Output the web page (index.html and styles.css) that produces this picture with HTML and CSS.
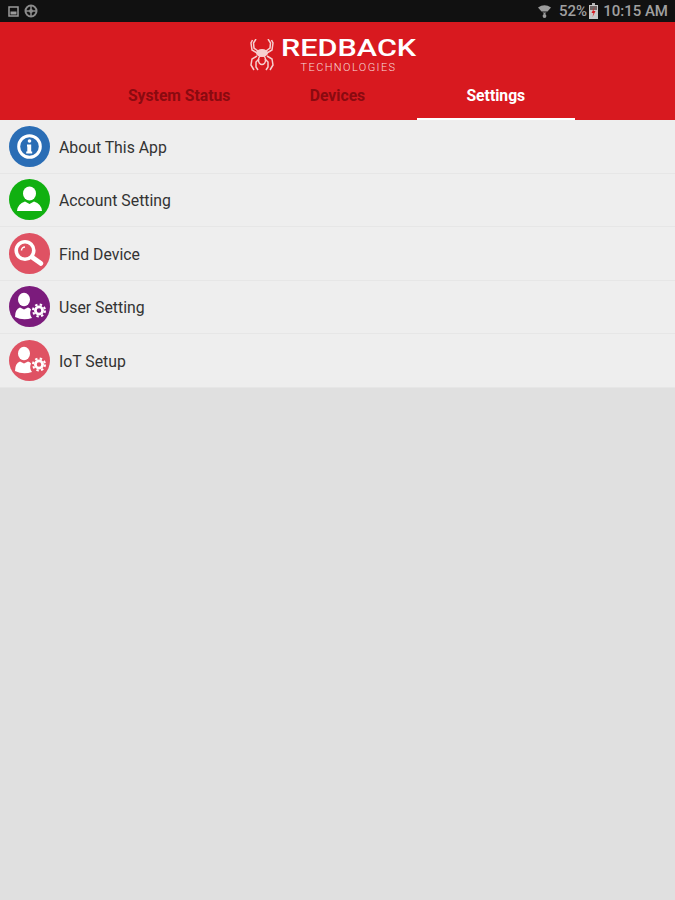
FILE: index.html
```html
<!DOCTYPE html>
<html>
<head lang="en">
    <meta charset="UTF-8">
    <title>Redback Technologies</title>
    <link rel="stylesheet" href="styles.css">
</head>
<body>
<div class="status-bar">
    <div class="status-left">
        <svg class="status-icon" width="11" height="11" viewBox="0 0 11 11">
            <rect x="1" y="1" width="9" height="9" fill="none" stroke="#9c9c9c" stroke-width="1.5"/>
            <rect x="2.500" y="5.500" width="6" height="3" fill="#9c9c9c"/>
        </svg>
        <svg class="status-icon" width="14" height="14" viewBox="0 0 14 14">
            <circle cx="7" cy="7" r="5.500" fill="none" stroke="#8c8c8c" stroke-width="2"/>
            <path d="M7 1v12M1 7h12" stroke="#8c8c8c" stroke-width="1.500"/>
            <circle cx="7" cy="7" r="2" fill="#8c8c8c"/>
        </svg>
    </div>
    <div class="status-right">
        <svg class="wifi" width="13" height="14" viewBox="0 0 13 14">
            <path d="M0 3.500Q6.500 -1 13 3.500L9.500 7.500H3.500z" fill="#9c9c9c"/>
            <path d="M4.500 8.500h4L6.500 10.500z" fill="#9c9c9c"/>
            <circle cx="6.500" cy="12" r="1.900" fill="#9c9c9c"/>
        </svg>
        <span class="pct">52%</span>
        <svg class="battery" width="9" height="16" viewBox="0 0 9 16">
            <rect x="3" y="0" width="3" height="2" fill="#b5b5b5"/>
            <rect x="0" y="2" width="9" height="14" fill="#c9c9c9"/>
            <rect x="1" y="3" width="7" height="4" fill="#6f6464"/>
            <path d="M5.500 4L2.500 10h2l-1 4 3-6h-2z" fill="#d8191f"/>
        </svg>
        <span>10:15 AM</span>
    </div>
</div>

<div class="header">
    <div class="logo">
        <svg width="24" height="32" viewBox="0 0 24 32">
            <g fill="none" stroke="#f6cfcf" stroke-width="1.500">
                <path d="M8 12L4 9 3.500 4 6 0M16 12l4-3 .5-5L18 0"/>
                <path d="M7 14L2 11 1 4 2.500 1M17 14l5-3 1-7-1.500-3"/>
                <path d="M7 17l-5 3-1 6 3 5M17 17l5 3 1 6-3 5"/>
                <path d="M9 20l-3 3 0 5 2 3M15 20l3 3 0 5-2 3"/>
            </g>
            <ellipse cx="12" cy="14" rx="6" ry="4" fill="#f6cfcf"/>
            <ellipse cx="12" cy="21" rx="3.500" ry="4.500" fill="none" stroke="#f6cfcf" stroke-width="1.500"/>
        </svg>
        <div class="logo-text">
            <div class="logo-name">REDBACK</div>
            <div class="logo-sub">TECHNOLOGIES</div>
        </div>
    </div>
    <ul class="tabs">
        <li>System Status</li>
        <li>Devices</li>
        <li class="selected">Settings</li>
    </ul>
</div>

<ul class="menu">
    <li>
        <svg class="menu-icon" viewBox="0 0 41 41">
            <circle cx="20.500" cy="20.500" r="20.500" fill="#2a6db5"/>
            <circle cx="20.500" cy="20.500" r="10.800" fill="none" stroke="#fff" stroke-width="3"/>
            <circle cx="20.500" cy="15" r="1.800" fill="#fff"/>
            <path d="M18 18.500h4.200v7h1v2h-6v-2h1.100v-5H18z" fill="#fff"/>
        </svg>
        <span>About This App</span>
    </li>
    <li>
        <svg class="menu-icon" viewBox="0 0 41 41">
            <circle cx="20.500" cy="20.500" r="20.500" fill="#10b010"/>
            <ellipse cx="20.500" cy="14.500" rx="6.500" ry="7" fill="#fff"/>
            <path d="M8 32Q8.500 25 16 22.500L20.500 25 25 22.500Q32.500 25 33 32z" fill="#fff"/>
        </svg>
        <span>Account Setting</span>
    </li>
    <li>
        <svg class="menu-icon" viewBox="0 0 41 41">
            <circle cx="20.500" cy="20.500" r="20.500" fill="#df5263"/>
            <circle cx="16" cy="17.500" r="8.800" fill="#df5263" stroke="#fff" stroke-width="3.600"/>
            <path d="M23.500 24.500l8.500 6" stroke="#fff" stroke-width="4.600" stroke-linecap="round"/>
            <path d="M12.500 17.500a3.500 3.500 0 0 1 3.500-3.500" fill="none" stroke="#fff" stroke-width="1.500"/>
        </svg>
        <span>Find Device</span>
    </li>
    <li>
        <svg class="menu-icon" viewBox="0 0 41 41">
            <circle cx="20.500" cy="20.500" r="20.500" fill="#7b1b7c"/>
            <ellipse cx="15" cy="13.500" rx="6" ry="6.800" fill="#fff"/>
            <path d="M6 31Q6 23 11 21.500L15 23.500 19 21.500Q21 22 22 23.500 20 28 23 32 14 35 6 31z" fill="#fff"/>
            <circle cx="30" cy="24.500" r="3.600" fill="none" stroke="#fff" stroke-width="2.800"/>
            <circle cx="30" cy="24.500" r="6" fill="none" stroke="#fff" stroke-width="2" stroke-dasharray="2.400 2.310"/>
        </svg>
        <span>User Setting</span>
    </li>
    <li>
        <svg class="menu-icon" viewBox="0 0 41 41">
            <circle cx="20.500" cy="20.500" r="20.500" fill="#df5263"/>
            <ellipse cx="15" cy="13.500" rx="6" ry="6.800" fill="#fff"/>
            <path d="M6 31Q6 23 11 21.500L15 23.500 19 21.500Q21 22 22 23.500 20 28 23 32 14 35 6 31z" fill="#fff"/>
            <circle cx="30" cy="24.500" r="3.600" fill="none" stroke="#fff" stroke-width="2.800"/>
            <circle cx="30" cy="24.500" r="6" fill="none" stroke="#fff" stroke-width="2" stroke-dasharray="2.400 2.310"/>
        </svg>
        <span>IoT Setup</span>
    </li>
</ul>
</body>
</html>
```

FILE: styles.css
```css
*{
    margin: 0;
    padding: 0;
    box-sizing: border-box;
}
li{
    list-style: none;
}
html, body{
    height: 100%;
}
body{
    background: #e0e0e0;
    font-family: Roboto, "Liberation Sans", sans-serif;
    overflow: hidden;
}
.status-bar{
    display: flex;
    justify-content: space-between;
    align-items: center;
    height: 22px;
    padding: 0 7px 0 8px;
    background: #111111;
    color: #a0a0a0;
    font-size: 15px;
    font-weight: 500;
}
.status-left, .status-right{
    display: flex;
    align-items: center;
}
.status-left{
    gap: 5px;
}
.wifi{
    margin-right: 8px;
}
.battery{
    margin: 0 5px 0 2px;
}
.header{
    height: 98px;
    background: #d8191f;
}
.logo{
    display: flex;
    justify-content: center;
    gap: 7px;
    height: 56px;
    padding: 18px 9px 0 0;
}
.logo svg{
    margin-top: -1px;
}
.logo-text{
    width: 136px;
    color: #ffffff;
    text-align: center;
}
.logo-name{
    font-weight: 500;
    font-size: 23px;
    line-height: 18px;
    transform: scaleX(1.33);
    transform-origin: left;
    text-align: left;
    white-space: nowrap;
}
.logo-sub{
    margin-top: 4px;
    font-size: 11px;
    font-weight: 300;
    letter-spacing: 1.4px;
    line-height: 11px;
    color: #f7d9d9;
    white-space: nowrap;
}
.tabs{
    display: flex;
    padding: 0 100px;
}
.tabs li{
    flex: 1;
    height: 42px;
    line-height: 36px;
    text-align: center;
    color: #8a0a10;
    font-size: 15.700px;
    font-weight: 700;
    border-bottom: 2px solid transparent;
}
.tabs .selected{
    color: #ffffff;
    border-bottom-color: #ffffff;
}
.menu li{
    display: flex;
    align-items: center;
    gap: 9px;
    height: 53.500px;
    padding-left: 9px;
    background: #eeeeee;
    border-bottom: 1px solid #e6e6e6;
    color: #333333;
    font-size: 15.800px;
}
.menu li span{
    padding-top: 2px;
}
.menu-icon{
    width: 41px;
    height: 41px;
}
```
